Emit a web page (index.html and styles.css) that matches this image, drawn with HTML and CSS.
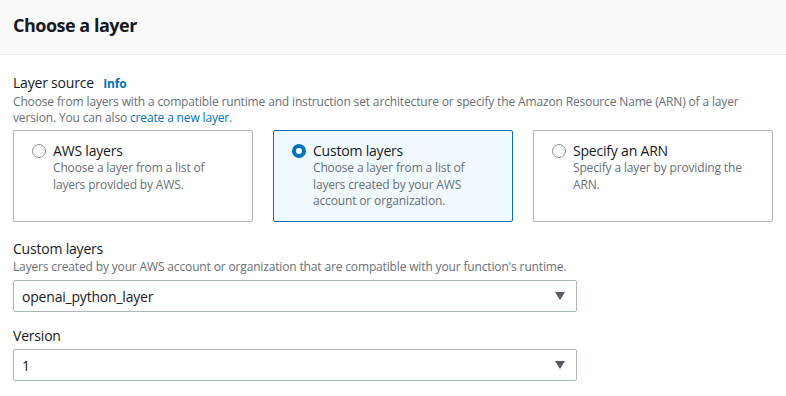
FILE: index.html
```html
<!DOCTYPE html>
<html lang="en">
<head>
    <meta charset="UTF-8">
    <meta name="viewport" content="width=device-width, initial-scale=1.0">
    <title>Choose a layer</title>
    <link rel="stylesheet" href="styles.css">
</head>
<body>
    <div class="panel">
        <div class="panel-header">
            <h2>Choose a layer</h2>
        </div>

        <div class="panel-body">
            <div class="field">
                <div class="field-label">Layer source <a class="info-link" href="#">Info</a></div>
                <div class="field-desc">
                    <span class="desc-line">Choose from layers with a compatible runtime and instruction set architecture or specify the Amazon Resource Name (ARN) of a layer</span>
                    version. You can also <a href="#">create a new layer</a>.
                </div>

                <div class="tiles">
                    <label class="tile">
                        <span class="radio"></span>
                        <span class="tile-text">
                            <span class="tile-title">AWS layers</span>
                            <span class="tile-desc">Choose a layer from a list of layers provided by AWS.</span>
                        </span>
                    </label>
                    <label class="tile selected">
                        <span class="radio checked"></span>
                        <span class="tile-text">
                            <span class="tile-title">Custom layers</span>
                            <span class="tile-desc">Choose a layer from a list of layers created by your AWS account or organization.</span>
                        </span>
                    </label>
                    <label class="tile">
                        <span class="radio"></span>
                        <span class="tile-text">
                            <span class="tile-title">Specify an ARN</span>
                            <span class="tile-desc">Specify a layer by providing the ARN.</span>
                        </span>
                    </label>
                </div>
            </div>

            <div class="field">
                <div class="field-label">Custom layers</div>
                <div class="field-desc">Layers created by your AWS account or organization that are compatible with your function's runtime.</div>
                <div class="select">
                    <span>openai_python_layer</span>
                    <span class="caret"></span>
                </div>
            </div>

            <div class="field">
                <div class="field-label">Version</div>
                <div class="select">
                    <span>1</span>
                    <span class="caret"></span>
                </div>
            </div>
        </div>
    </div>
</body>
</html>
```

FILE: styles.css
```css
body {
    font-family: "Open Sans", "Noto Sans", sans-serif;
    margin: 0;
    background: white;
    color: #16191f;
}

.panel-header {
    background: #fafafa;
    border-bottom: 1px solid #eaeded;
    height: 54px;
    padding: 0 13px;
    display: flex;
    align-items: center;
}

.panel-header h2 {
    margin: 0 0 4px 0;
    font-size: 18px;
    font-weight: 700;
    letter-spacing: -0.5px;
}

.panel-body {
    padding: 18px 13px 0 13px;
}

.field-label {
    font-size: 14px;
    line-height: 20px;
    letter-spacing: -0.2px;
}

.info-link {
    color: #0073bb;
    font-size: 12px;
    font-weight: 700;
    text-decoration: none;
    margin-left: 6px;
}

.field-desc {
    font-size: 12px;
    line-height: 16px;
    color: #687078;
    letter-spacing: -0.15px;
}

.desc-line {
    display: block;
}

.field-desc a {
    color: #0073bb;
    text-decoration: none;
}

.tiles {
    display: grid;
    grid-template-columns: repeat(3, 240px);
    gap: 20px;
    margin-top: 4px;
}

.tile {
    display: flex;
    gap: 7px;
    border: 1px solid #aab7b8;
    border-radius: 2px;
    height: 92px;
    box-sizing: border-box;
    padding: 10px 17px 0 17px;
}

.tile.selected {
    border-color: #0073bb;
    background: #f1faff;
}

.radio {
    flex: none;
    width: 12px;
    height: 12px;
    margin: 3px 0 0 1px;
    border: 1px solid #879596;
    border-radius: 50%;
    background: white;
}

.radio.checked {
    border: 4px solid #0073bb;
    width: 6px;
    height: 6px;
}

.tile-text {
    display: flex;
    flex-direction: column;
}

.tile-title {
    font-size: 14px;
    line-height: 19px;
    letter-spacing: -0.2px;
}

.tile-desc {
    font-size: 12px;
    line-height: 16.5px;
    color: #687078;
    letter-spacing: -0.15px;
}

.field + .field {
    margin-top: 14px;
}

.field:nth-child(2) {
    margin-top: 17px;
}

.select {
    width: 564px;
    height: 32px;
    box-sizing: border-box;
    border: 1px solid #aab7b8;
    border-radius: 2px;
    margin-top: 5px;
    padding: 0 10px 0 8px;
    display: flex;
    align-items: center;
    justify-content: space-between;
    font-size: 14px;
    letter-spacing: -0.2px;
}

.field-label + .select {
    margin-top: 3px;
}

.caret {
    width: 0;
    height: 0;
    border-left: 5px solid transparent;
    border-right: 5px solid transparent;
    border-top: 8px solid #545b64;
    margin-right: 1px;
}
```
